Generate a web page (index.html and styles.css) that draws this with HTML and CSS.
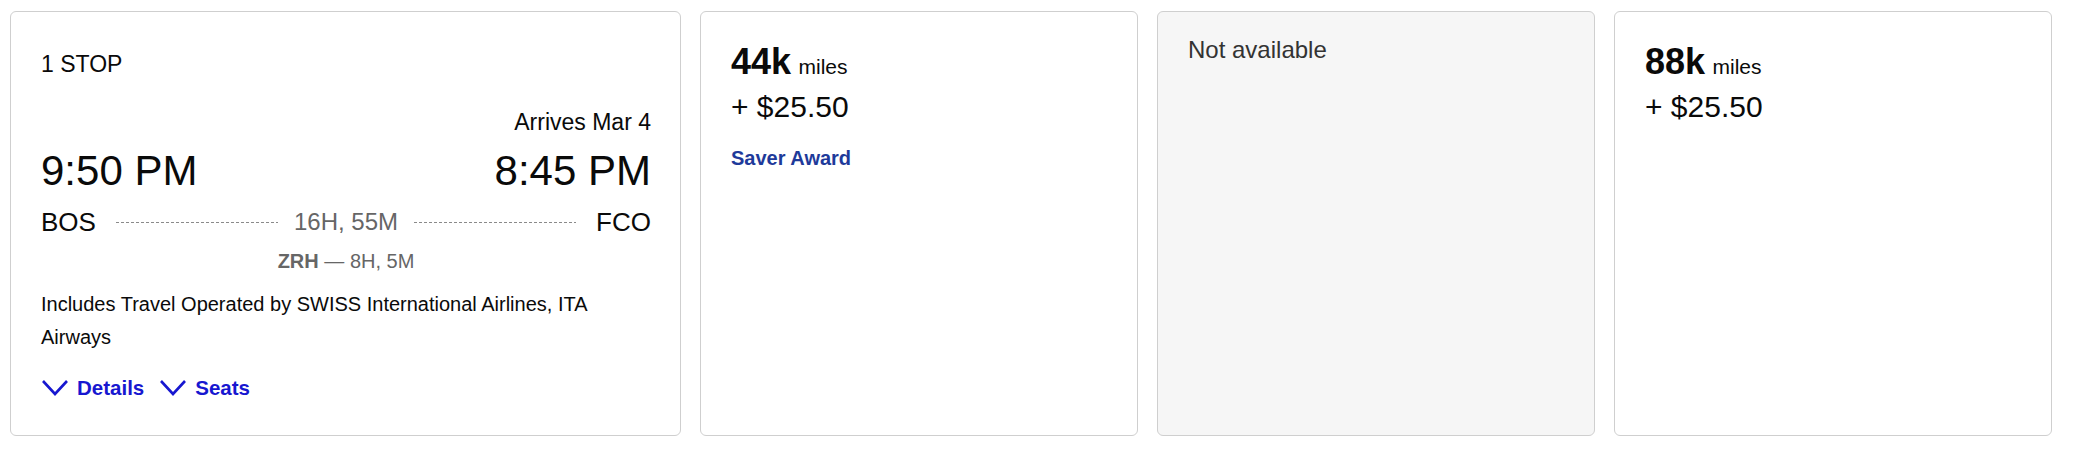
FILE: index.html
```html
<!DOCTYPE html>
<html lang="en">
<head>
<meta charset="utf-8">
<title>Flight result</title>
<link rel="stylesheet" href="styles.css">
</head>
<body>
<div class="results">
  <div class="card flight">
    <div class="stops">1 STOP</div>
    <div class="arrives">Arrives Mar 4</div>
    <div class="times">
      <span>9:50 PM</span>
      <span>8:45 PM</span>
    </div>
    <div class="route">
      <span class="airport">BOS</span>
      <span class="dots"></span>
      <span class="duration">16H, 55M</span>
      <span class="dots"></span>
      <span class="airport">FCO</span>
    </div>
    <div class="layover"><b>ZRH</b> — 8H, 5M</div>
    <div class="operated">Includes Travel Operated by SWISS International Airlines, ITA Airways</div>
    <div class="links">
      <a class="toggle" href="#"><svg class="chev" width="28" height="18" viewBox="0 0 28 18"><path d="M2 2 L14 15 L26 2" fill="none" stroke="currentColor" stroke-width="2.6"/></svg>Details</a>
      <a class="toggle" href="#"><svg class="chev" width="28" height="18" viewBox="0 0 28 18"><path d="M2 2 L14 15 L26 2" fill="none" stroke="currentColor" stroke-width="2.6"/></svg>Seats</a>
    </div>
  </div>
  <div class="card fare">
    <div class="miles"><b>44k</b> <span>miles</span></div>
    <div class="cash">+ $25.50</div>
    <div class="award">Saver Award</div>
  </div>
  <div class="card fare na">
    <div class="none">Not available</div>
  </div>
  <div class="card fare">
    <div class="miles"><b>88k</b> <span>miles</span></div>
    <div class="cash">+ $25.50</div>
  </div>
</div>
</body>
</html>
```
FILE: styles.css
```css
* { box-sizing: border-box; }
html, body { margin: 0; background: #fff; }
body {
  font-family: "Liberation Sans", Arial, sans-serif;
  color: #0a0a0a;
}
.results {
  display: grid;
  grid-template-columns: 671px 438px 438px 438px;
  grid-template-rows: 425px;
  gap: 19px;
  padding: 11px 10px;
}
.card {
  border: 1px solid #cfcfcf;
  border-radius: 6px;
  background: #fff;
  padding: 26px 29px 0 30px;
}
.na { background: #f6f6f6; }

.flight { padding-top: 38px; }
.stops { font-size: 23px; line-height: 28px; }
.arrives { font-size: 23px; line-height: 28px; text-align: right; margin-top: 30px; }
.times {
  display: flex; justify-content: space-between;
  font-size: 42px; line-height: 48px; margin-top: 11px;
}
.route {
  display: flex; align-items: center; gap: 16px;
  font-size: 26px; line-height: 32px; margin-top: 11px;
}
.route .airport { flex: none; }
.route .airport:first-child { margin-right: 4px; }
.route .airport:last-child { margin-left: 4px; }
.dots {
  flex: 1; height: 1px;
  background: repeating-linear-gradient(to right, #8a8a8a 0 3px, transparent 3px 5px);
}
.duration { color: #666; font-size: 24px; }
.layover {
  text-align: center; color: #666; font-size: 20px; line-height: 28px; margin-top: 9px;
}
.layover b { font-weight: 700; }
.operated { font-size: 20px; line-height: 33px; margin-top: 13px; }
.links { display: flex; gap: 15px; margin-top: 20px; }
.toggle {
  display: flex; align-items: center; gap: 8px;
  color: #1717d0; font-weight: 700; font-size: 20.5px; line-height: 28px; text-decoration: none;
}
.chev { flex: none; }

.fare { padding-top: 30px; }
.miles { line-height: 40px; }
.miles b { font-size: 36px; font-weight: 700; }
.miles span { font-size: 21px; margin-left: 3px; }
.cash { font-size: 30px; line-height: 34px; margin-top: 1px; }
.award { color: #1e3a9a; font-weight: 700; font-size: 20px; line-height: 28px; margin-top: 20px; }
.none { font-size: 24px; line-height: 30px; color: #333; margin-top: -7px; }
```
